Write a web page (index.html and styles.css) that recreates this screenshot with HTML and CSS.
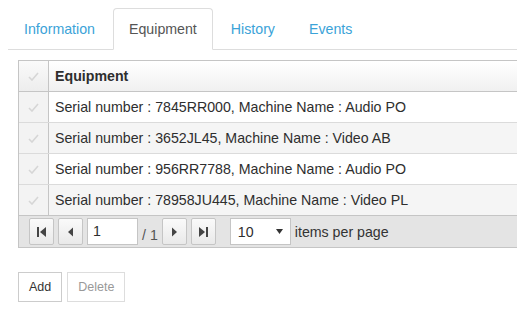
FILE: index.html
```html
<!DOCTYPE html>
<html>
<head>
<meta charset="utf-8">
<link rel="stylesheet" href="styles.css">
</head>
<body>
<ul class="tabs">
  <li class="tab"><a>Information</a></li>
  <li class="tab active"><a>Equipment</a></li>
  <li class="tab"><a>History</a></li>
  <li class="tab"><a>Events</a></li>
</ul>
<div class="content">
  <div class="grid">
    <div class="row head">
      <div class="chk"><svg width="11" height="9" viewBox="0 0 11 9"><path d="M1 5 L4 8 L10 1" fill="none" stroke="#d6d6d6" stroke-width="1.6"/></svg></div>
      <div class="cell">Equipment</div>
    </div>
    <div class="row">
      <div class="chk"><svg width="11" height="9" viewBox="0 0 11 9"><path d="M1 5 L4 8 L10 1" fill="none" stroke="#d6d6d6" stroke-width="1.6"/></svg></div>
      <div class="cell">Serial number : 7845RR000, Machine Name : Audio PO</div>
    </div>
    <div class="row alt">
      <div class="chk"><svg width="11" height="9" viewBox="0 0 11 9"><path d="M1 5 L4 8 L10 1" fill="none" stroke="#d6d6d6" stroke-width="1.6"/></svg></div>
      <div class="cell">Serial number : 3652JL45, Machine Name : Video AB</div>
    </div>
    <div class="row">
      <div class="chk"><svg width="11" height="9" viewBox="0 0 11 9"><path d="M1 5 L4 8 L10 1" fill="none" stroke="#d6d6d6" stroke-width="1.6"/></svg></div>
      <div class="cell">Serial number : 956RR7788, Machine Name : Audio PO</div>
    </div>
    <div class="row alt last">
      <div class="chk"><svg width="11" height="9" viewBox="0 0 11 9"><path d="M1 5 L4 8 L10 1" fill="none" stroke="#d6d6d6" stroke-width="1.6"/></svg></div>
      <div class="cell">Serial number : 78958JU445, Machine Name : Video PL</div>
    </div>
    <div class="pager">
      <span class="pbtn"><svg width="12" height="12" viewBox="0 0 12 12"><rect x="1" y="1" width="2" height="10" fill="#444"/><path d="M10 1 L4 6 L10 11 Z" fill="#444"/></svg></span>
      <span class="pbtn"><svg width="12" height="12" viewBox="0 0 12 12"><path d="M8 1.5 L3 6 L8 10.5 Z" fill="#444"/></svg></span>
      <span class="pinput">1</span>
      <span class="of">/ 1</span>
      <span class="pbtn"><svg width="12" height="12" viewBox="0 0 12 12"><path d="M4 1.5 L9 6 L4 10.5 Z" fill="#444"/></svg></span>
      <span class="pbtn"><svg width="12" height="12" viewBox="0 0 12 12"><path d="M2 1 L8 6 L2 11 Z" fill="#444"/><rect x="9" y="1" width="2" height="10" fill="#444"/></svg></span>
      <span class="psel"><span>10</span><svg width="7" height="5" viewBox="0 0 7 5"><path d="M0 0 L7 0 L3.5 5 Z" fill="#333"/></svg></span>
      <span class="ptext">items per page</span>
    </div>
  </div>
  <div class="actions">
    <button class="btn">Add</button>
    <button class="btn disabled">Delete</button>
  </div>
</div>
</body>
</html>
```

FILE: styles.css
```css
html, body {
  margin: 0;
  padding: 0;
  background: #fff;
  overflow: hidden;
}
body {
  font-family: "Liberation Sans", Arial, sans-serif;
  font-size: 14.2px;
  color: #333;
}
.tabs {
  list-style: none;
  margin: 8px 0 0 8px;
  padding: 0;
  display: flex;
  border-bottom: 1px solid #ddd;
  height: 41px;
}
.tab {
  margin-right: 2px;
  margin-bottom: -1px;
}
.tab a {
  display: block;
  padding: 10px 15px;
  line-height: 20px;
  border: 1px solid transparent;
  color: #3ba3d8;
  border-radius: 4px 4px 0 0;
}
.tab.active a {
  color: #555;
  border-color: #ddd #ddd transparent #ddd;
  background: #fff;
}
.content {
  padding: 10px 0 0 18px;
}
.grid {
  width: 560px;
  border: 1px solid #c5c5c5;
  border-right: none;
  color: #2e2e2e;
}
.row {
  display: flex;
  height: 30px;
  border-bottom: 1px solid #dbdbdb;
}
.row.last { border-bottom: none; }
.row.alt { background: #f5f5f5; }
.row.head {
  background: linear-gradient(#fff, #f0f0f0);
  border-bottom: 1px solid #c5c5c5;
}
.chk {
  width: 29px;
  flex: none;
  background: #f3f3f3;
  border-right: 1px solid #c5c5c5;
  display: flex;
  align-items: center;
  justify-content: center;
}
.row.head .chk { background: linear-gradient(#fafafa, #ededed); }
.cell {
  padding: 0 6px;
  display: flex;
  align-items: center;
}
.row.head .cell { font-weight: bold; }
.pager {
  background: #e4e4e4;
  border-top: 1px solid #c5c5c5;
  height: 31px;
  display: flex;
  align-items: center;
  padding-left: 10px;
}
.pbtn {
  width: 23px;
  height: 25px;
  border: 1px solid #c5c5c5;
  border-radius: 2px;
  background: linear-gradient(#fafafa, #e9e9e9);
  display: flex;
  align-items: center;
  justify-content: center;
  margin-right: 4px;
}
.pinput {
  width: 44px;
  height: 25px;
  border: 1px solid #c5c5c5;
  background: #fff;
  padding-left: 5px;
  line-height: 25px;
}
.of {
  margin: 6px 4px 0 4px;
  color: #555;
}
.psel {
  margin-left: 10px;
  border: 1px solid #c5c5c5;
  background: #fff;
  display: flex;
  align-items: center;
  justify-content: space-between;
  padding: 0 7px 0 7px;
  box-sizing: border-box;
  width: 61px;
  height: 27px;
}
.ptext {
  margin-left: 4px;
  color: #333;
}
.actions {
  margin-top: 24px;
  display: flex;
  gap: 5px;
}
.btn {
  font-family: "Liberation Sans", Arial, sans-serif;
  font-size: 12.5px;
  color: #333;
  background: #fff;
  border: 1px solid #ccc;
  height: 30px;
  padding: 0 10px;
  border-radius: 0;
}
.btn.disabled {
  color: #999;
  border-color: #ddd;
}
```
